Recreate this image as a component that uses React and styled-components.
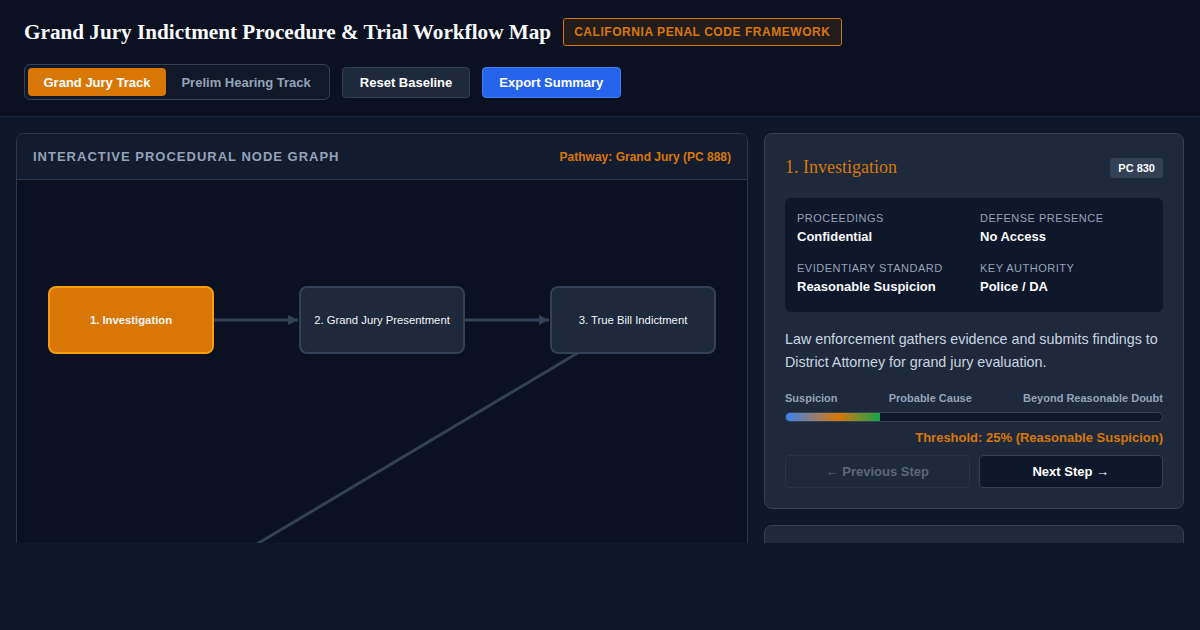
import React, { useState } from 'react';
import styled, { createGlobalStyle } from 'styled-components';

const GlobalStyle = createGlobalStyle`
  html, body {
    margin: 0;
    padding: 0;
    background: #0f172a;
    font-family: "Liberation Sans", Arial, sans-serif;
    color: #e2e8f0;
  }
  * { box-sizing: border-box; }
`;

// nodes of the grand jury track; the rows below the first are out of view
const NODES = [
  { id: 1, label: '1. Investigation', x: 114, y: 140 },
  { id: 2, label: '2. Grand Jury Presentment', x: 365, y: 140 },
  { id: 3, label: '3. True Bill Indictment', x: 616, y: 140 },
];

// edge leading from node 3 down to the next row (arraignment)
const NEXT_ROW = { x: 114, y: 439 };

const NODE_W = 166;
const NODE_H = 68;

const Page = styled.div`
  min-height: 630px;
  background: #0f172a;
`;

const Header = styled.header`
  background: #0b1120;
  border-bottom: 1px solid #1e293b;
  padding: 18px 24px 16px;
  display: flex;
  flex-direction: column;
  gap: 18px;
`;

const TitleRow = styled.div`
  display: flex;
  align-items: center;
  gap: 12px;
`;

const Title = styled.h1`
  margin: 0;
  font-family: "Liberation Serif", "Times New Roman", serif;
  font-size: 21.2px;
  font-weight: 700;
  color: #f8fafc;
`;

const Badge = styled.span`
  border: 1px solid #d97706;
  background: rgba(217, 119, 6, 0.12);
  color: #d97706;
  font-size: 12px;
  font-weight: 700;
  letter-spacing: 0.55px;
  padding: 6px 10px;
  border-radius: 3px;
  text-transform: uppercase;
`;

const Controls = styled.div`
  display: flex;
  align-items: center;
  gap: 12px;
`;

const Toggle = styled.div`
  display: flex;
  padding: 3px;
  border: 1px solid #334155;
  border-radius: 6px;
  background: #111827;
`;

const ToggleBtn = styled.button`
  border: none;
  border-radius: 4px;
  padding: 0 15.5px;
  height: 28px;
  font: 700 13px "Liberation Sans", Arial, sans-serif;
  background: ${(p) => (p.$active ? '#d97706' : 'transparent')};
  color: ${(p) => (p.$active ? '#ffffff' : '#94a3b8')};
  cursor: pointer;
`;

const Button = styled.button`
  height: 31px;
  padding: 0 16.5px;
  border-radius: 4px;
  font: 700 13px "Liberation Sans", Arial, sans-serif;
  color: #ffffff;
  cursor: pointer;
  background: ${(p) => (p.$primary ? '#2563eb' : '#1e293b')};
  border: 1px solid ${(p) => (p.$primary ? '#3b82f6' : '#334155')};
`;

const Main = styled.main`
  display: grid;
  grid-template-columns: 732px 420px;
  gap: 16px;
  padding: 16px 16px 0;
  height: 426px;
  overflow: hidden;
`;

const GraphPanel = styled.section`
  border: 1px solid #2c384b;
  border-radius: 8px;
  background: #0b1120;
  display: flex;
  flex-direction: column;
  min-height: 700px;
`;

const PanelHead = styled.div`
  display: flex;
  justify-content: space-between;
  align-items: center;
  height: 46px;
  padding: 0 16px;
  background: #131c2e;
  border-bottom: 1px solid #2c384b;
  border-radius: 8px 8px 0 0;
`;

const PanelTitle = styled.h2`
  margin: 0;
  font-size: 13px;
  font-weight: 700;
  letter-spacing: 1px;
  color: #94a3b8;
  text-transform: uppercase;
`;

const Pathway = styled.span`
  font-size: 12px;
  font-weight: 700;
  color: #d97706;
`;

const Canvas = styled.div`
  position: relative;
  flex: 1;
`;

const EdgeLayer = styled.svg`
  position: absolute;
  inset: 0;
  width: 100%;
  height: 100%;
`;

const Node = styled.button`
  position: absolute;
  width: ${NODE_W}px;
  height: ${NODE_H}px;
  border-radius: 8px;
  font: ${(p) => (p.$active ? 700 : 400)} 11.3px "Liberation Sans", Arial, sans-serif;
  color: #f1f5f9;
  background: ${(p) => (p.$active ? '#d97706' : '#1e293b')};
  border: 2px solid ${(p) => (p.$active ? '#f59e0b' : '#334155')};
  cursor: pointer;
`;

const Side = styled.div`
  display: flex;
  flex-direction: column;
  gap: 16px;
`;

const Card = styled.section`
  background: #1e293b;
  border: 1px solid #334155;
  border-radius: 8px;
  padding: 20px;
  min-height: ${(p) => p.$minH || 0}px;
`;

const CardHead = styled.div`
  display: flex;
  justify-content: space-between;
  align-items: center;
  margin-top: 3px;
`;

const StepTitle = styled.h3`
  margin: 0;
  font-family: "Liberation Serif", "Times New Roman", serif;
  font-size: 18px;
  font-weight: 400;
  color: #d97706;
`;

const Code = styled.span`
  background: #334155;
  color: #f8fafc;
  font-size: 11px;
  font-weight: 700;
  padding: 4px 8px;
  border-radius: 3px;
`;

const InfoGrid = styled.div`
  margin-top: 20px;
  background: #0f172a;
  border-radius: 6px;
  padding: 14px 12px 18px;
  display: grid;
  grid-template-columns: 1fr 1fr;
  row-gap: 18px;
  column-gap: 12px;
`;

const Label = styled.div`
  font-size: 11px;
  letter-spacing: 0.5px;
  color: #94a3b8;
  text-transform: uppercase;
`;

const Value = styled.div`
  margin-top: 5px;
  font-size: 13px;
  font-weight: 700;
  color: #f8fafc;
`;

const Desc = styled.p`
  margin: 16px 0 0;
  font-size: 14.3px;
  line-height: 23px;
  color: #cbd5e1;
`;

const Scale = styled.div`
  margin-top: 18px;
  display: flex;
  justify-content: space-between;
  font-size: 11px;
  font-weight: 700;
  color: #94a3b8;
`;

const Track = styled.div`
  margin-top: 8px;
  height: 10px;
  border: 1px solid #334155;
  background: #0f172a;
  border-radius: 5px;
  overflow: hidden;
`;

const Fill = styled.div`
  height: 100%;
  background: linear-gradient(90deg, #3b82f6 0%, #d97706 55%, #16a34a 100%);
`;

const Threshold = styled.div`
  margin-top: 8px;
  text-align: right;
  font-size: 13px;
  font-weight: 700;
  color: #d97706;
`;

const NavRow = styled.div`
  margin-top: 10px;
  display: grid;
  grid-template-columns: 1fr 1fr;
  gap: 9px;
`;

const NavBtn = styled.button`
  height: 33px;
  border-radius: 4px;
  font: 700 13px "Liberation Sans", Arial, sans-serif;
  border: 1px solid ${(p) => (p.disabled ? '#293548' : '#334155')};
  background: ${(p) => (p.disabled ? '#1e293b' : '#0f172a')};
  color: ${(p) => (p.disabled ? '#5b6678' : '#ffffff')};
  cursor: ${(p) => (p.disabled ? 'default' : 'pointer')};
`;

const Arrow = styled.span`
  font-weight: 400;
  font-size: 13px;
`;

function Graph({ active, onPick }) {
  const edges = [];
  for (let i = 0; i < NODES.length - 1; i++) {
    const a = NODES[i];
    const b = NODES[i + 1];
    edges.push(
      <line
        key={a.id}
        x1={a.x + NODE_W / 2}
        y1={a.y}
        x2={b.x - NODE_W / 2 - 1}
        y2={b.y}
        stroke="#334155"
        strokeWidth="3"
        markerEnd="url(#head)"
      />
    );
  }
  const last = NODES[NODES.length - 1];

  return (
    <Canvas>
      <EdgeLayer>
        <defs>
          <marker
            id="head"
            viewBox="0 0 10 10"
            refX="10"
            refY="5"
            markerUnits="userSpaceOnUse"
            markerWidth="10"
            markerHeight="10"
            orient="auto"
          >
            <path d="M0 0 L10 5 L0 10 z" fill="#334155" />
          </marker>
        </defs>
        {edges}
        <line x1={last.x} y1={last.y} x2={NEXT_ROW.x} y2={NEXT_ROW.y} stroke="#334155" strokeWidth="3" />
      </EdgeLayer>
      {NODES.map((n) => (
        <Node
          key={n.id}
          $active={n.id === active}
          style={{ left: n.x - NODE_W / 2, top: n.y - NODE_H / 2 }}
          onClick={() => onPick(n.id)}
        >
          {n.label}
        </Node>
      ))}
    </Canvas>
  );
}

export default function App() {
  const [track, setTrack] = useState('grand');
  const [active, setActive] = useState(1);

  return (
    <Page>
      <GlobalStyle />
      <Header>
        <TitleRow>
          <Title>Grand Jury Indictment Procedure &amp; Trial Workflow Map</Title>
          <Badge>California Penal Code Framework</Badge>
        </TitleRow>
        <Controls>
          <Toggle>
            <ToggleBtn $active={track === 'grand'} onClick={() => setTrack('grand')}>
              Grand Jury Track
            </ToggleBtn>
            <ToggleBtn $active={track === 'prelim'} onClick={() => setTrack('prelim')}>
              Prelim Hearing Track
            </ToggleBtn>
          </Toggle>
          <Button onClick={() => setActive(1)}>Reset Baseline</Button>
          <Button $primary>Export Summary</Button>
        </Controls>
      </Header>
      <Main>
        <GraphPanel>
          <PanelHead>
            <PanelTitle>Interactive Procedural Node Graph</PanelTitle>
            <Pathway>Pathway: Grand Jury (PC 888)</Pathway>
          </PanelHead>
          <Graph active={active} onPick={setActive} />
        </GraphPanel>
        <Side>
          <Card>
            <CardHead>
              <StepTitle>1. Investigation</StepTitle>
              <Code>PC 830</Code>
            </CardHead>
            <InfoGrid>
              <div>
                <Label>Proceedings</Label>
                <Value>Confidential</Value>
              </div>
              <div>
                <Label>Defense Presence</Label>
                <Value>No Access</Value>
              </div>
              <div>
                <Label>Evidentiary Standard</Label>
                <Value>Reasonable Suspicion</Value>
              </div>
              <div>
                <Label>Key Authority</Label>
                <Value>Police / DA</Value>
              </div>
            </InfoGrid>
            <Desc>
              Law enforcement gathers evidence and submits findings to District Attorney for grand jury evaluation.
            </Desc>
            <Scale>
              <span>Suspicion</span>
              <span>Probable Cause</span>
              <span>Beyond Reasonable Doubt</span>
            </Scale>
            <Track>
              <Fill style={{ width: '25%' }} />
            </Track>
            <Threshold>Threshold: 25% (Reasonable Suspicion)</Threshold>
            <NavRow>
              <NavBtn disabled>
                <Arrow>←</Arrow> Previous Step
              </NavBtn>
              <NavBtn onClick={() => setActive(Math.min(active + 1, NODES.length))}>
                Next Step <Arrow>→</Arrow>
              </NavBtn>
            </NavRow>
          </Card>
          <Card $minH={200} />
        </Side>
      </Main>
    </Page>
  );
}
